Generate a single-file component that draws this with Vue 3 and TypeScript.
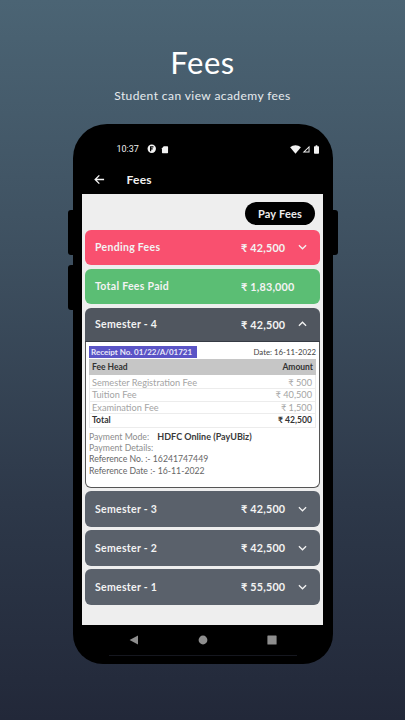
<script setup lang="ts">
interface Row { label: string; amount: string; tone: string; chevron: 'up' | 'down' | 'none' }
const topRows: Row[] = [
  { label: 'Pending Fees', amount: '₹ 42,500', tone: 'red', chevron: 'down' },
  { label: 'Total Fees Paid', amount: '₹ 1,83,000', tone: 'green', chevron: 'none' },
]
const lowerRows: Row[] = [
  { label: 'Semester - 3', amount: '₹ 42,500', tone: 'slate', chevron: 'down' },
  { label: 'Semester - 2', amount: '₹ 42,500', tone: 'slate', chevron: 'down' },
  { label: 'Semester - 1', amount: '₹ 55,500', tone: 'slate', chevron: 'down' },
]
const fees = [
  { head: 'Semester Registration Fee', amount: '₹ 500' },
  { head: 'Tuition Fee', amount: '₹ 40,500' },
  { head: 'Examination Fee', amount: '₹ 1,500' },
]
</script>

<template>
  <main class="page">
    <h1 class="title">Fees</h1>
    <p class="subtitle">Student can view academy fees</p>

    <div class="phone">
      <span class="side side-l1"></span>
      <span class="side side-l2"></span>
      <span class="side side-r"></span>

      <div class="status">
        <div class="status-left">
          <span class="time">10:37</span>
          <svg class="st-icon" viewBox="0 0 10 10"><circle cx="5" cy="5" r="4.4" fill="#f2f2f2" /><path d="M3.8 7.6V3h3M3.8 5.2h2.2" stroke="#000" stroke-width="1.3" fill="none" /></svg>
          <svg class="st-card" viewBox="0 0 10 10"><path d="M3.4 1H8a.8.8 0 0 1 .8.8v7a.8.8 0 0 1-.8.8H2a.8.8 0 0 1-.8-.8V3.4z" fill="#f2f2f2" /></svg>
        </div>
        <div class="status-right">
          <svg class="st-wifi" viewBox="0 0 12 10"><path d="M0 2.6C3.4-.4 8.6-.4 12 2.6L6 9.6z" fill="#f2f2f2" /></svg>
          <svg class="st-sig" viewBox="0 0 10 10"><path d="M9.4 .8v8.6H.8zM8.2 3.8 3.8 8.2h4.4z" fill="#f2f2f2" fill-rule="evenodd" /></svg>
          <svg class="st-bat" viewBox="0 0 6 10"><path d="M2 0h2v1h1.2c.4 0 .8.3.8.8v7.4c0 .4-.4.8-.8.8H.8c-.4 0-.8-.4-.8-.8V1.800c0-.5.4-.8.8-.8H2z" fill="#f2f2f2" /></svg>
        </div>
      </div>

      <div class="appbar">
        <svg class="back" viewBox="0 0 12 12"><path d="M11 6H1.500M5.800 1.500 1.300 6l4.500 4.500" stroke="#f4f4f4" stroke-width="1.500" fill="none" /></svg>
        <span class="appbar-title">Fees</span>
      </div>

      <div class="screen">
        <div class="pay-wrap"><button class="pay">Pay Fees</button></div>

        <div v-for="r in topRows" :key="r.label" class="row" :class="r.tone">
          <span class="row-label">{{ r.label }}</span>
          <span class="row-amount">{{ r.amount }}</span>
          <svg v-if="r.chevron === 'down'" class="chev" viewBox="0 0 10 6"><path d="M1 1l4 4 4-4" /></svg>
          <span v-else class="chev"></span>
        </div>

        <section class="open">
          <div class="row slate open-head">
            <span class="row-label">Semester - 4</span>
            <span class="row-amount">₹ 42,500</span>
            <svg class="chev" viewBox="0 0 10 6"><path d="M1 5l4-4 4 4" /></svg>
          </div>
          <div class="receipt">
            <div class="rc-top">
              <span class="rc-no">Receipt No. 01/22/A/01721</span>
              <span class="rc-date">Date: 16-11-2022</span>
            </div>
            <div class="tb-head"><span>Fee Head</span><span>Amount</span></div>
            <div class="tb-body">
              <div v-for="f in fees" :key="f.head" class="tb-row"><span>{{ f.head }}</span><span>{{ f.amount }}</span></div>
              <div class="tb-row tb-total"><span>Total</span><span>₹ 42,500</span></div>
            </div>
            <div class="details">
              <p class="mode">Payment Mode: <b>HDFC Online (PayUBiz)</b></p>
              <p>Payment Details:</p>
              <p class="dark">Reference No. :- 16241747449</p>
              <p class="dark">Reference Date :- 16-11-2022</p>
            </div>
          </div>
        </section>

        <div v-for="r in lowerRows" :key="r.label" class="row" :class="r.tone">
          <span class="row-label">{{ r.label }}</span>
          <span class="row-amount">{{ r.amount }}</span>
          <svg class="chev" viewBox="0 0 10 6"><path d="M1 1l4 4 4-4" /></svg>
        </div>
      </div>

      <div class="navbar">
        <svg class="nav-i" viewBox="0 0 10 10"><path d="M9 .4v9.2L.6 5z" fill="#8e8e8e" /></svg>
        <svg class="nav-i" viewBox="0 0 10 10"><circle cx="5" cy="5" r="4.400" fill="#8e8e8e" /></svg>
        <svg class="nav-i" viewBox="0 0 10 10"><rect x=".4" y=".4" width="9.200" height="9.200" rx=".6" fill="#8e8e8e" /></svg>
      </div>
      <div class="chin"><span class="chin-line"></span></div>
    </div>
  </main>
</template>

<style>
html, body { margin: 0; padding: 0; }
</style>

<style scoped>
.page {
  width: 405px;
  height: 720px;
  overflow: hidden;
  box-sizing: border-box;
  padding-top: 43px;
  display: flex;
  flex-direction: column;
  align-items: center;
  background: linear-gradient(180deg, #4b6474 0%, #3e5060 35%, #2d3849 70%, #222839 100%);
  font-family: "Lato", "DejaVu Sans", sans-serif;
  color: #fff;
}
.title {
  margin: 0;
  font-size: 31px;
  line-height: 38px;
  font-weight: 400;
  letter-spacing: .6px;
}
.subtitle {
  margin: 7px 0 0;
  font-size: 12px;
  line-height: 15px;
  letter-spacing: .42px;
  color: #e6ebee;
}
.phone {
  position: relative;
  margin-top: 21px;
  width: 260px;
  height: 540px;
  flex: none;
  background: #000;
  border-radius: 34px 34px 30px 30px;
  display: flex;
  flex-direction: column;
  align-items: center;
}
.side {
  position: absolute;
  width: 6px;
  height: 45px;
  background: #000;
}
.side-l1 { left: -5px; top: 86px; border-radius: 3px 0 0 3px; }
.side-l2 { left: -5px; top: 141px; border-radius: 3px 0 0 3px; }
.side-r { right: -5px; top: 86px; border-radius: 0 3px 3px 0; }
.status {
  width: 100%;
  box-sizing: border-box;
  height: 24px;
  margin-top: 13px;
  padding: 0 14px 0 44px;
  display: flex;
  justify-content: space-between;
  align-items: center;
}
.status-left { display: flex; align-items: center; gap: 5px; }
.status-right { display: flex; align-items: center; gap: 1px; }
.time { font-size: 9px; margin-right: 3px; color: #efefef; font-family: "Roboto", sans-serif; }
.st-icon { width: 9.500px; height: 9.500px; }
.st-card { width: 8px; height: 9px; }
.st-wifi { width: 11px; height: 9px; }
.st-sig { width: 8px; height: 8px; margin-right: 3px; }
.st-bat { width: 5px; height: 9px; }
.appbar {
  width: 100%;
  box-sizing: border-box;
  height: 33px;
  padding: 3px 0 0 21px;
  display: flex;
  align-items: center;
  gap: 22px;
}
.back { width: 11px; height: 11px; }
.appbar-title { font-size: 12px; font-weight: 700; letter-spacing: .25px; color: #f2f2f2; }
.screen {
  width: 241px;
  height: 431px;
  box-sizing: border-box;
  flex: none;
  background: #eeeeee;
  padding: 8px 3px 0;
  display: flex;
  flex-direction: column;
  gap: 3.500px;
}
.pay-wrap { display: flex; justify-content: flex-end; padding: 0 5px 1px 0; }
.pay {
  width: 70px;
  height: 23px;
  padding: 0;
  border: 0;
  border-radius: 12px;
  background: #000;
  color: #ececec;
  font-family: inherit;
  font-size: 11px;
  font-weight: 700;
  letter-spacing: .2px;
}
.row {
  height: 35.500px;
  flex: none;
  box-sizing: border-box;
  padding-left: 10px;
  display: flex;
  align-items: center;
  border-radius: 6px;
  font-size: 10.500px;
  font-weight: 700;
  color: #f3f3f3;
  letter-spacing: .3px;
}
.red { background: #f9506f; }
.green { background: #5bbe74; }
.slate { background: #5a616b; }
.row-label { flex: 1; }
.row-amount { width: 57px; flex: none; letter-spacing: .2px; font-size: 10.800px; white-space: nowrap; }
.chev { width: 9px; height: 6px; flex: none; margin-right: 13px; fill: none; stroke: #f3f3f3; stroke-width: 1.400; }
.open { display: flex; flex-direction: column; }
.open-head { height: 34px; background: #50565f; border-radius: 6px 6px 0 0; border-bottom: 1px solid #363b44; }
.receipt {
  height: 146px;
  box-sizing: border-box;
  padding: 4px 3px 0;
  background: #fff;
  border: 1px solid #555;
  border-top: 0;
  border-radius: 0 0 6px 6px;
  color: #333;
}
.rc-top { display: flex; justify-content: space-between; align-items: center; height: 12px; }
.rc-no {
  background: #5a54c6;
  color: #e8e8f8;
  padding: 0 2px;
  width: 104px;
  line-height: 12px;
  font-size: 8px;
  font-weight: 700;
  white-space: nowrap;
}
.rc-date { font-size: 7.800px; color: #444; }
.tb-head {
  margin-top: 1px;
  height: 16px;
  padding: 0 3px;
  background: #c6c6c6;
  display: flex;
  justify-content: space-between;
  align-items: center;
  font-size: 8.500px;
  font-weight: 700;
  color: #333;
}
.tb-body {
  padding-top: 2px;
  border: 1px solid #ececec;
  border-top: 0;
}
.tb-row {
  height: 12.500px;
  box-sizing: border-box;
  padding: 0 3px 0 2px;
  display: flex;
  justify-content: space-between;
  align-items: center;
  font-size: 9.200px;
  color: #a4a4a4;
  border-bottom: 1px solid #ececec;
}
.tb-row:last-child { border-bottom: 0; }
.tb-total { color: #333; font-weight: 700; font-size: 8.600px; }
.details { margin-top: 3px; }
.details p {
  margin: 0;
  height: 11.400px;
  line-height: 11.400px;
  font-size: 8.700px;
  color: #8c8c8c;
  white-space: nowrap;
}
.details .dark { color: #666; }
.details b { margin-left: 6px; color: #3a3a3a; font-weight: 700; font-size: 9px; }
.navbar {
  width: 148px;
  height: 30px;
  flex: none;
  display: flex;
  justify-content: space-between;
  align-items: center;
}
.nav-i { width: 10px; height: 10px; }
.chin { flex: 1; display: flex; justify-content: center; }
.chin-line { width: 188px; height: 1px; background: #15171f; }
</style>
